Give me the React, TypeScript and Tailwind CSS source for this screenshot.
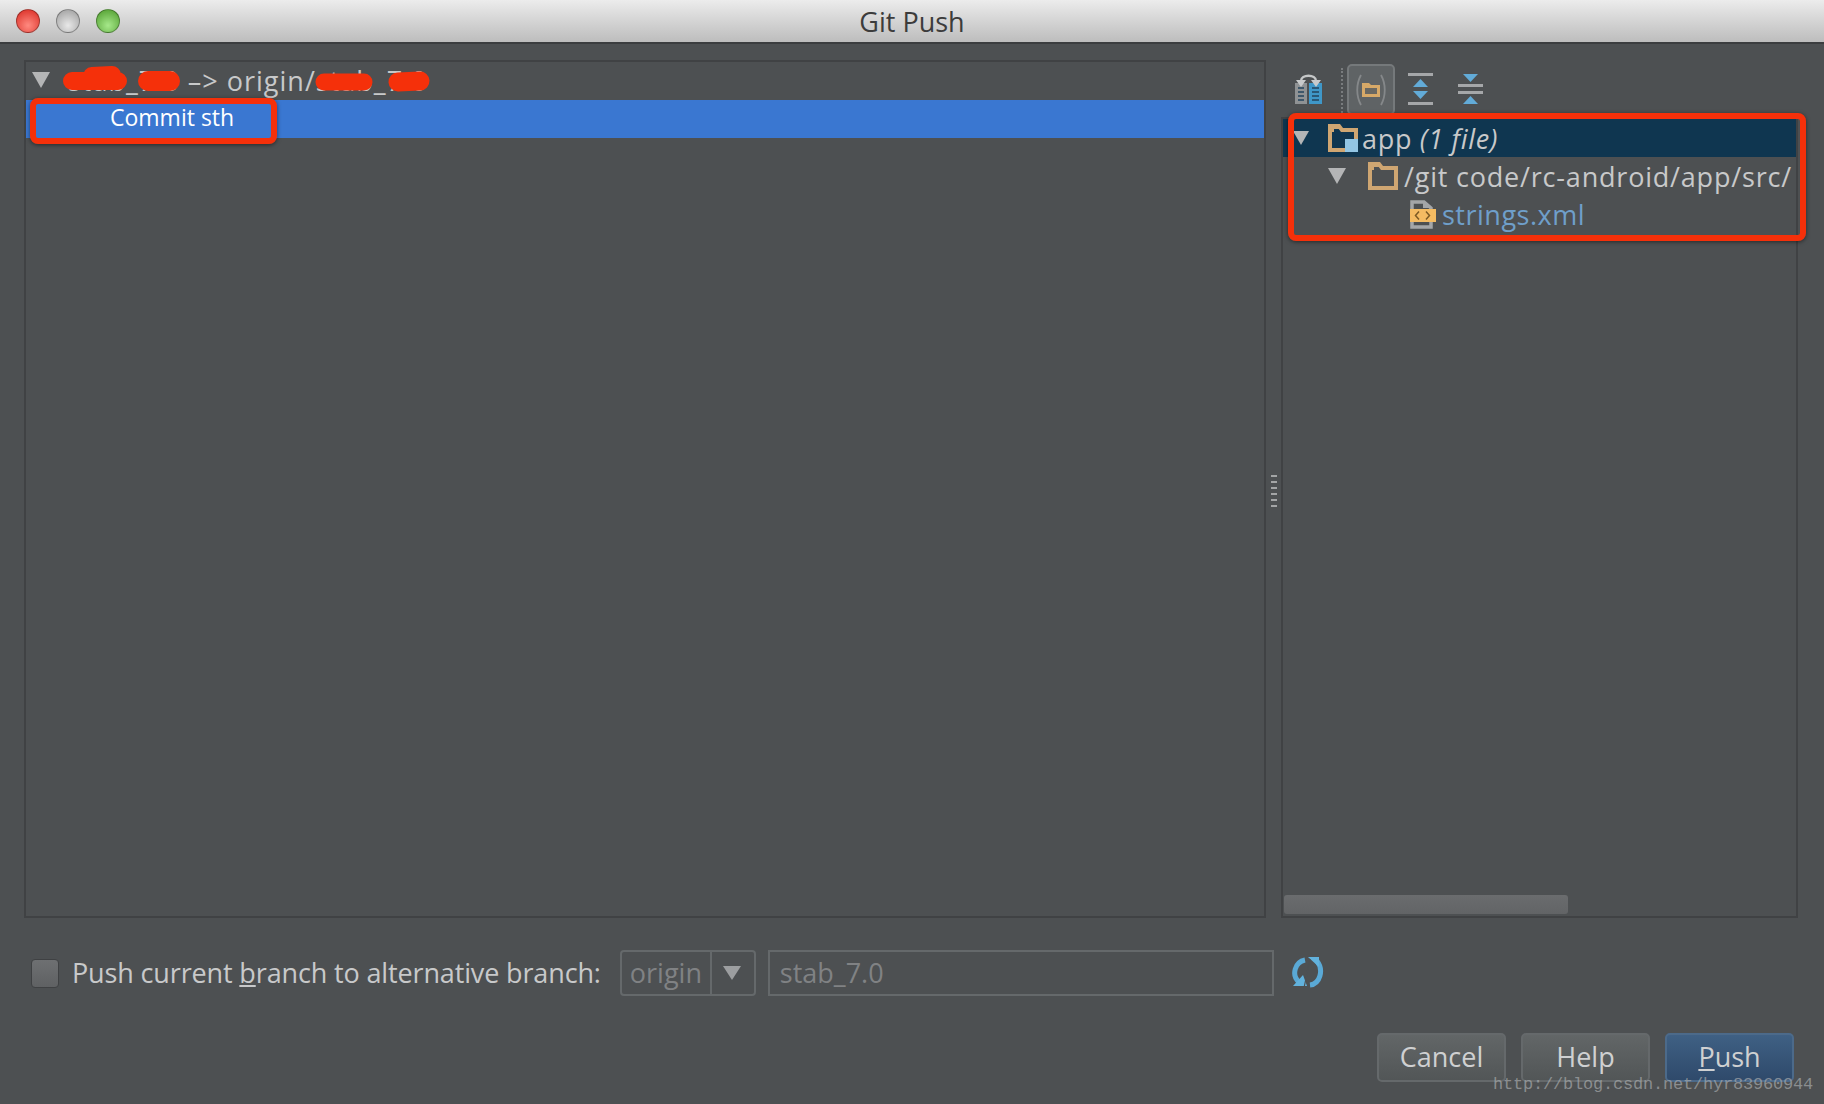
const sans = "font-['Open_Sans','Liberation_Sans',sans-serif]"

function Arrow({ className }: { className: string }) {
  return (
    <svg className={className} viewBox="0 0 18 16">
      <path d="M0 0H18L9 16Z" fill="#b4b5b6" />
    </svg>
  )
}

function Folder({ module }: { module?: boolean }) {
  return (
    <svg className="w-[30px] h-[28px] shrink-0" viewBox="0 0 30 28">
      <path d="M2 26V2H11L14 6H28V26Z" fill="none" stroke="#cfa672" strokeWidth="4" />
      <path d="M1 1H11L14 5H6V8H1Z" fill="#cfa672" />
      {module && <rect x="17" y="15" width="13" height="13" fill="#93c6e4" />}
    </svg>
  )
}

function FileXml() {
  return (
    <svg className="w-[26px] h-[29px] shrink-0" viewBox="0 0 26 29">
      <path d="M2 9V2H14L21 8V9" fill="none" stroke="#a4a6a8" strokeWidth="3.5" />
      <path d="M13 1L22 8H13Z" fill="#a4a6a8" />
      <path d="M2 22V27H21V22" fill="none" stroke="#a4a6a8" strokeWidth="3.5" />
      <rect x="0" y="9" width="26" height="13" fill="#f4bb62" />
      <path d="M9 11.500L5.500 15.500L9 19.500M16 11.500L19.500 15.500L16 19.500" fill="none" stroke="#7c5a24" strokeWidth="1.5" />
    </svg>
  )
}

function TrafficLight({ color }: { color: string }) {
  return <span className={`w-6 h-6 rounded-full border border-black/30 ${color}`} />
}

function ToolbarIcons() {
  return (
    <div className="flex items-start pt-[4px] pl-[13px] h-[57px]">
      <svg className="w-[29px] h-[32px] mt-[9px]" viewBox="0 0 29 32">
        <path d="M1 10H13V31H1Z" fill="#8f9294" />
        <path d="M15 10H28V31H15Z" fill="#3f97c8" />
        <path d="M4 15H10M4 19H10M4 23H10M4 27H10M18 15H25M18 19H25M18 23H25M18 27H25" stroke="#24445c" strokeWidth="1.5" />
        <path d="M7 8C7 1 22 1 22 8" fill="none" stroke="#c5c7c8" strokeWidth="2.500" />
        <path d="M2 7H12L7 14ZM17 7H27L22 14Z" fill="#c8cacb" />
      </svg>
      <span className="ml-[18px] mt-[4px] h-[48px] border-l-2 border-dotted border-[#797c7e]" />
      <div className="ml-[4px] w-[48px] h-[51px] flex items-center justify-center rounded-[5px] border-2 border-[#75797b] bg-[#5f6365]">
        <svg className="w-[30px] h-[34px]" viewBox="0 0 30 34">
          <path d="M5 2C0 11 0 23 5 32M25 2C30 11 30 23 25 32" fill="none" stroke="#85888a" strokeWidth="1.8" />
          <path d="M6 10H13L15 12H24V24H6Z" fill="#d7a968" />
          <rect x="9" y="15" width="12" height="6" fill="#6a6862" />
        </svg>
      </div>
      <svg className="ml-[13px] mt-[9px] w-[25px] h-[32px]" viewBox="0 0 25 32">
        <path d="M0 1.500H25M0 30.500H25" stroke="#a5a7a9" strokeWidth="3" />
        <path d="M12.500 6L20 14H5ZM12.500 26L5 18H20Z" fill="#62abd8" />
      </svg>
      <svg className="ml-[25px] mt-[9px] w-[25px] h-[32px]" viewBox="0 0 25 32">
        <path d="M0 12.500H25M0 19.500H25" stroke="#a5a7a9" strokeWidth="3" />
        <path d="M5 1H20L12.500 9ZM12.500 23L20 31H5Z" fill="#62abd8" />
      </svg>
    </div>
  )
}

function Refresh() {
  return (
    <svg className="ml-[18px] w-[32px] h-[34px]" viewBox="0 0 32 34">
      <path d="M13 4C3 6 -1 19 7 26" fill="none" stroke="#5aa9d6" strokeWidth="5" />
      <path d="M18 29C28 28 32 14 25 5" fill="none" stroke="#5aa9d6" strokeWidth="5" />
      <path d="M16 1H27V11ZM1 30H15L11 19Z" fill="#62b2dd" />
      <path d="M18 3L12 32" stroke="#4d5052" strokeWidth="1.2" />
    </svg>
  )
}

function Button({ children, primary }: { children: React.ReactNode; primary?: boolean }) {
  return (
    <button
      className={`w-[129px] h-[49px] pb-[2px] rounded-[5px] border-2 text-[27px] leading-none text-[#cfd0d1] ${
        primary
          ? "border-[#4c6a8a] bg-gradient-to-b from-[#3f6084] to-[#2f4a6b]"
          : "border-[#65696b] bg-gradient-to-b from-[#626667] to-[#525657]"
      }`}
    >
      {children}
    </button>
  )
}

export default function App() {
  return (
    <div className={`relative w-[1824px] h-[1104px] overflow-hidden bg-[#4d5052] text-[#c8c9ca] ${sans}`}>
      <div className="relative flex items-center h-[44px] border-b-2 border-[#3b3d3f] bg-gradient-to-b from-[#ececec] to-[#bdbdbd] pl-4 gap-4">
        <TrafficLight color="bg-[radial-gradient(circle_at_50%_70%,#ff8a80,#d8281f)]" />
        <TrafficLight color="bg-[radial-gradient(circle_at_50%_70%,#e8e8e8,#9a9a9a)]" />
        <TrafficLight color="bg-[radial-gradient(circle_at_50%_70%,#a6e88a,#4c9a2a)]" />
        <span className="absolute inset-x-0 text-center text-[27px] leading-none text-[#3c3c3c]">Git Push</span>
      </div>

      <div className="flex h-[857px] pt-[16px] pl-[24px]">
        <div className="w-[1242px] h-[858px] border-2 border-[#404244]">
          <div className="flex items-center h-[38px] pb-[2px] text-[27px] leading-none tracking-[1px]">
            <Arrow className="ml-[6px] w-[18px] h-[16px]" />
            <span className="ml-[18px]">stab_7.0 –&gt; origin/stab_7.0</span>
          </div>
          <div className="flex items-center h-[38px] pb-[3px] bg-[#3a77d1] pl-[84px] text-[23px] leading-none text-white">
            Commit sth
          </div>
        </div>

        <div className="w-[15px] pt-[415px]">
          <div className="ml-[5px] w-[6px] h-[32px] bg-[repeating-linear-gradient(to_bottom,#a3a5a6_0,#a3a5a6_2px,transparent_2px,transparent_6px)]" />
        </div>

        <div className="w-[517px] h-[858px] flex flex-col">
          <ToolbarIcons />
          <div className="flex-1 flex flex-col border-2 border-[#404244] text-[27px] leading-none">
            <div className="flex items-center h-[38px] bg-[#0f3650] pl-[10px] tracking-[0.7px]">
              <Arrow className="w-[16px] h-[16px]" />
              <span className="ml-[19px]"><Folder module /></span>
              <span className="ml-[4px]">app <i className="italic">(1 file)</i></span>
            </div>
            <div className="flex items-center h-[38px] pl-[45px] tracking-[0.8px]">
              <Arrow className="w-[18px] h-[16px]" />
              <span className="ml-[22px]"><Folder /></span>
              <span className="ml-[6px] whitespace-nowrap">/git code/rc-android/app/src/</span>
            </div>
            <div className="flex items-center h-[38px] pl-[127px] tracking-[0.5px]">
              <FileXml />
              <span className="ml-[6px] text-[#6f9fca]">strings.xml</span>
            </div>
            <div className="mt-auto mx-[1px] mb-[2px] w-[284px] h-[19px] rounded-[3px] bg-gradient-to-b from-[#6a6c6e] to-[#626466]" />
          </div>
        </div>
      </div>

      <div className="flex items-center h-[46px] mt-[49px] pl-[31px]">
        <span className="w-[28px] h-[29px] rounded-[4px] border border-[#3f4143] bg-gradient-to-b from-[#6e7072] to-[#5f6163]" />
        <span className="ml-[13px] pb-[2px] text-[27px] leading-none tracking-[-0.14px] whitespace-nowrap">
          Push current <u className="underline">b</u>ranch to alternative branch:
        </span>
        <div className="ml-[19px] flex items-center w-[136px] h-[46px] rounded-[4px] border-2 border-[#65696b] text-[27px] leading-none text-[#808284]">
          <span className="w-[88px] pl-[8px] pb-[2px]">origin</span>
          <span className="h-full border-l-2 border-[#65696b]" />
          <svg className="ml-[11px] w-[18px] h-[14px]" viewBox="0 0 18 14">
            <path d="M0 0H18L9 14Z" fill="#9c9ea0" />
          </svg>
        </div>
        <div className="ml-[12px] flex items-center w-[506px] h-[46px] border-2 border-[#65696b] pl-[10px] pb-[2px] text-[27px] leading-none text-[#808284]">
          stab_7.0
        </div>
        <Refresh />
      </div>

      <div className="flex justify-end gap-[15px] mt-[37px] pr-[30px]">
        <Button>Cancel</Button>
        <Button>Help</Button>
        <Button primary><u className="underline">P</u>ush</Button>
      </div>

      {/* red annotations drawn on top of the screenshot */}
      <div className="absolute left-[30px] top-[98px] w-[247px] h-[46px] rounded-[8px] border-[6px] border-[#f5300a] shadow-[0_1px_4px_rgba(0,0,0,0.5)]" />
      <div className="absolute left-[1288px] top-[113px] w-[518px] h-[128px] rounded-[8px] border-[6px] border-[#f5300a] shadow-[0_1px_4px_rgba(0,0,0,0.5)]" />
      <svg className="absolute left-[60px] top-[64px] w-[380px] h-[34px]" viewBox="0 0 380 34">
        <path d="M12 17L58 17M32 12L52 11" stroke="#f5300a" strokeWidth="18" strokeLinecap="round" />
        <path d="M88 17L110 17" stroke="#f5300a" strokeWidth="20" strokeLinecap="round" />
        <path d="M264 18L304 18" stroke="#f5300a" strokeWidth="17" strokeLinecap="round" />
        <path d="M338 18L360 17" stroke="#f5300a" strokeWidth="19" strokeLinecap="round" />
      </svg>

      <span className="absolute right-[11px] top-[1076px] font-['Liberation_Mono',monospace] text-[17px] leading-none tracking-[-0.2px] text-[#a6a9ab]/70">
        http://blog.csdn.net/hyr83960944
      </span>
    </div>
  )
}
